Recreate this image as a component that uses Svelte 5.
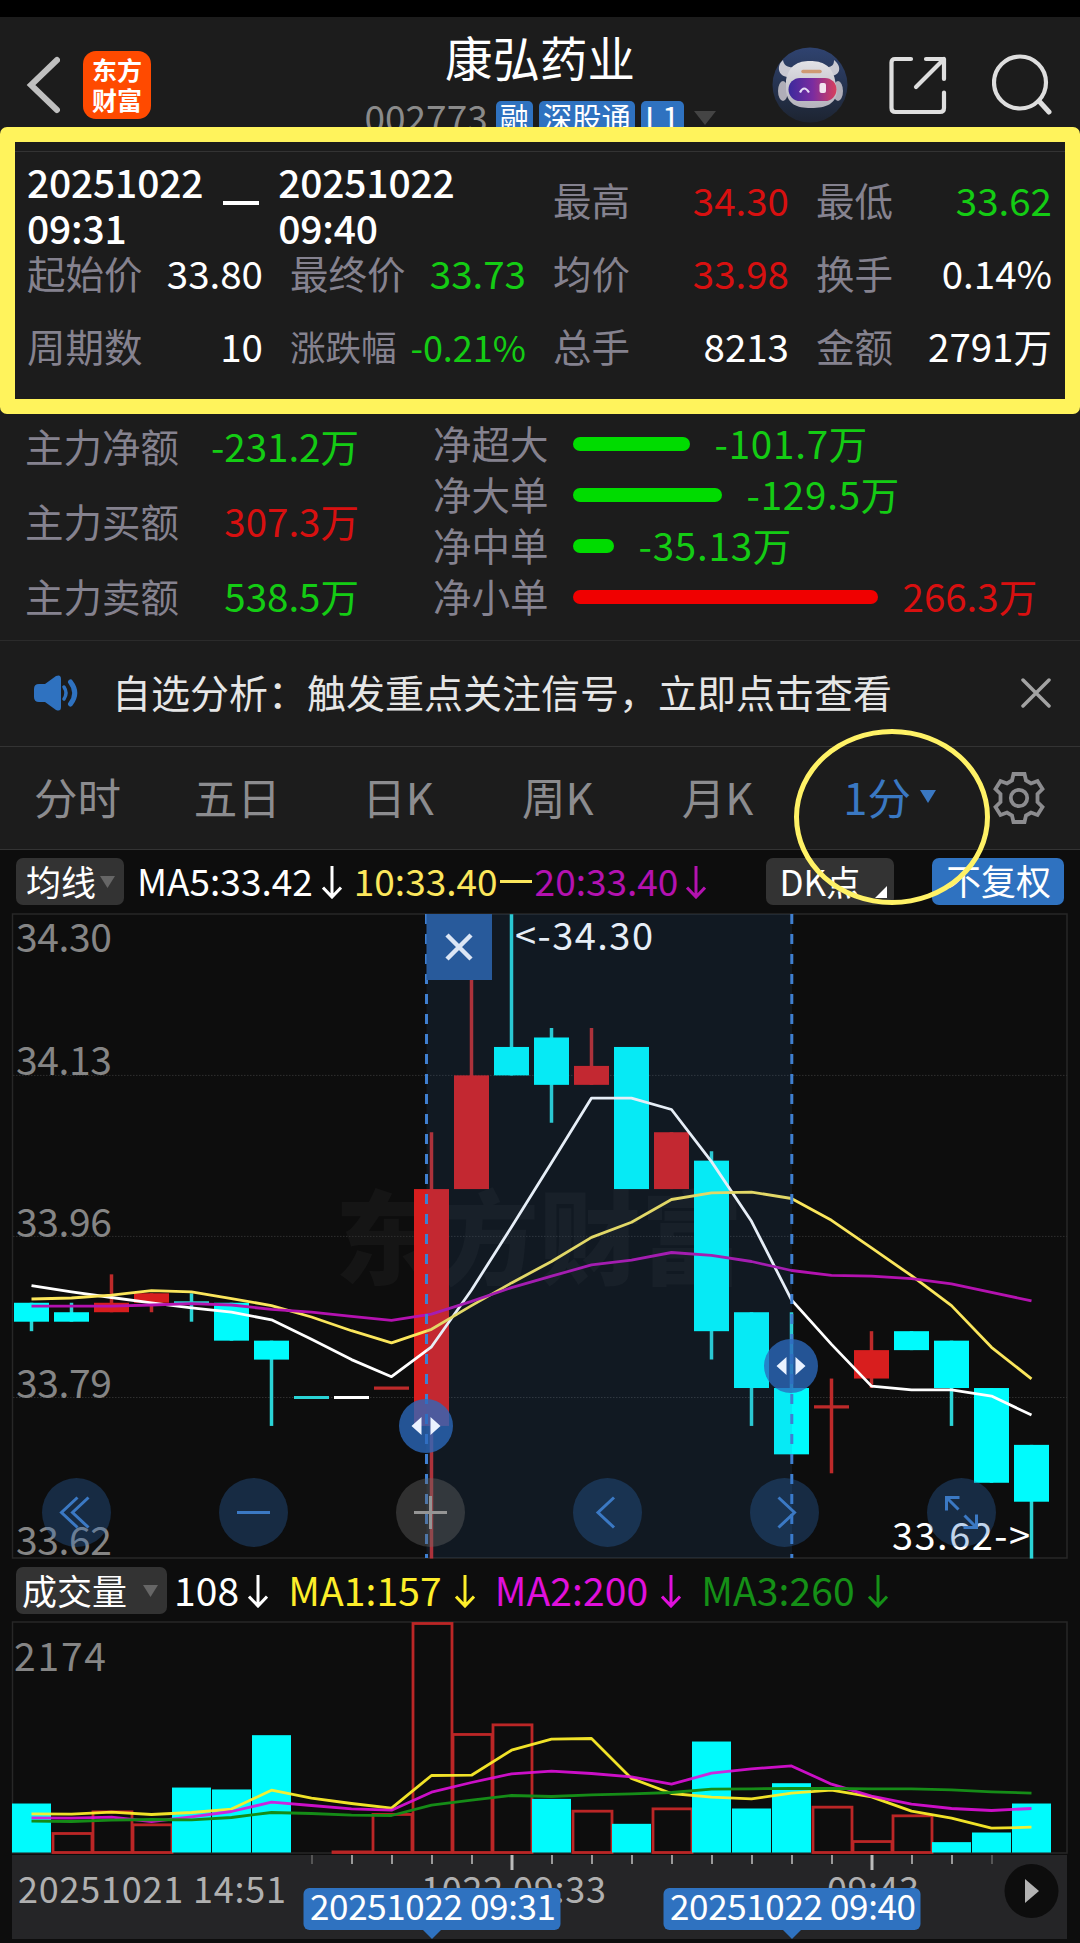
<script lang="ts">
	type Tone = 'up' | 'down' | 'flat';

	interface Quote {
		label: string;
		value: string;
		tone: Tone;
		small?: boolean;
	}

	const topQuotes: Quote[] = [
		{ label: '最高', value: '34.30', tone: 'up' },
		{ label: '最低', value: '33.62', tone: 'down' }
	];

	const quotes: Quote[] = [
		{ label: '起始价', value: '33.80', tone: 'flat' },
		{ label: '最终价', value: '33.73', tone: 'down' },
		{ label: '均价', value: '33.98', tone: 'up' },
		{ label: '换手', value: '0.14%', tone: 'flat' },
		{ label: '周期数', value: '10', tone: 'flat' },
		{ label: '涨跌幅', value: '-0.21%', tone: 'down', small: true },
		{ label: '总手', value: '8213', tone: 'flat' },
		{ label: '金额', value: '2791万', tone: 'flat' }
	];

	const mainFunds: Quote[] = [
		{ label: '主力净额', value: '-231.2万', tone: 'down' },
		{ label: '主力买额', value: '307.3万', tone: 'up' },
		{ label: '主力卖额', value: '538.5万', tone: 'down' }
	];

	const orders: (Quote & { width: number })[] = [
		{ label: '净超大', value: '-101.7万', tone: 'down', width: 117 },
		{ label: '净大单', value: '-129.5万', tone: 'down', width: 149 },
		{ label: '净中单', value: '-35.13万', tone: 'down', width: 41 },
		{ label: '净小单', value: '266.3万', tone: 'up', width: 305 }
	];

	const tabs = ['分时', '五日', '日K', '周K', '月K'];

	// open/close top, bottom, high, low, colour
	type Candle = [number, number, number, number, 'r' | 'c' | 'w'];
	const candles: Candle[] = [
		[33.89, 33.87, 33.89, 33.86, 'c'],
		[33.88, 33.87, 33.89, 33.87, 'c'],
		[33.89, 33.88, 33.92, 33.88, 'r'],
		[33.9, 33.89, 33.9, 33.88, 'r'],
		[33.89, 33.89, 33.9, 33.87, 'c'],
		[33.89, 33.85, 33.89, 33.85, 'c'],
		[33.85, 33.83, 33.85, 33.76, 'c'],
		[33.79, 33.79, 33.79, 33.79, 'c'],
		[33.79, 33.79, 33.79, 33.79, 'w'],
		[33.8, 33.8, 33.8, 33.8, 'r'],
		[34.01, 33.76, 34.07, 33.62, 'r'],
		[34.13, 34.01, 34.24, 34.01, 'r'],
		[34.16, 34.13, 34.3, 34.13, 'c'],
		[34.17, 34.12, 34.18, 34.08, 'c'],
		[34.14, 34.12, 34.18, 34.12, 'r'],
		[34.16, 34.01, 34.16, 34.01, 'c'],
		[34.07, 34.01, 34.07, 34.01, 'r'],
		[34.04, 33.86, 34.05, 33.83, 'c'],
		[33.88, 33.8, 33.88, 33.76, 'c'],
		[33.8, 33.73, 33.88, 33.73, 'c'],
		[33.78, 33.78, 33.81, 33.71, 'r'],
		[33.84, 33.81, 33.86, 33.8, 'r'],
		[33.86, 33.84, 33.86, 33.84, 'c'],
		[33.85, 33.8, 33.85, 33.76, 'c'],
		[33.8, 33.7, 33.8, 33.7, 'c'],
		[33.74, 33.68, 33.74, 33.62, 'c']
	];

	const ma5 = [33.908, 33.9016, 33.8956, 33.89, 33.8846, 33.88, 33.872, 33.8515, 33.83, 33.812, 33.8435, 33.9035, 33.97, 34.0377, 34.106, 34.106, 34.094, 34.039, 33.976, 33.893, 33.846, 33.802, 33.798, 33.798, 33.7915, 33.7715];
	const ma10 = [33.894, 33.895, 33.898, 33.9027, 33.9016, 33.8944, 33.887, 33.875, 33.8605, 33.8477, 33.862, 33.887, 33.911, 33.9336, 33.959, 33.975, 33.999, 34.006, 34.0068, 34, 33.977, 33.948, 33.9186, 33.887, 33.843, 33.8096];
	const ma20 = [33.8865, 33.8865, 33.8865, 33.8876, 33.889, 33.8876, 33.883, 33.88, 33.8756, 33.8714, 33.878, 33.8914, 33.906, 33.918, 33.93, 33.935, 33.943, 33.94, 33.9336, 33.924, 33.919, 33.918, 33.9155, 33.91, 33.901, 33.892];

	const volumes = [463, 189, 394, 271, 614, 596, 1109, 0, 15, 369, 2174, 1125, 1216, 507, 400, 271, 422, 1049, 416, 655, 438, 113, 356, 98, 189, 463];
	const volumeRed = [1, 2, 3, 8, 9, 10, 11, 12, 14, 16, 20, 21, 22];
	const volMa1 = [366, 362, 381, 359, 378, 410, 589, 514, 463, 419, 728, 731, 967, 1071, 1078, 700, 558, 523, 507, 561, 589, 526, 391, 325, 230, 239];
	const volMa2 = [328, 325, 334, 293, 337, 388, 476, 444, 413, 400, 570, 662, 744, 769, 747, 715, 646, 750, 791, 819, 646, 533, 457, 416, 397, 416];
	const volMa3 = [296, 293, 306, 312, 309, 331, 378, 369, 353, 350, 447, 495, 539, 529, 545, 555, 567, 599, 602, 605, 605, 602, 602, 592, 573, 561];

	const colors = { r: '#d81e1e', c: '#00fbfd', w: '#ffffff' };
	const lineColors = { r: '#bd2a2a', c: '#2ad4d6', w: '#ffffff' };

	const cx = (i: number) => 31.5 + i * 40;
	const py = (p: number) => 484.5 - (p - 33.79) * 947.4;
	const vy = (v: number) => 231.5 - (v / 2174) * 230;
	const line = (values: number[], scale: (n: number) => number) =>
		values.map((v, i) => `${cx(i)},${scale(v).toFixed(1)}`).join(' ');

	const priceLabels = [
		{ text: '34.30', y: 39 },
		{ text: '34.13', y: 161.5 },
		{ text: '33.96', y: 323.5 },
		{ text: '33.79', y: 484.5 },
		{ text: '33.62', y: 642 }
	];

	const gridLines = [162.4, 323.4, 484.5];
	const handles = [
		{ x: 426, y: 513 },
		{ x: 791, y: 453 }
	];
	const ticks = Array.from({ length: 18 }, (_, i) => 312 + i * 40);
	const rangeTags = [
		{ text: '20251022 09:31', x: 432 },
		{ text: '20251022 09:40', x: 792 }
	];
</script>

{#snippet arrow()}
	<svg class="arrow" width="20" height="34" viewBox="0 0 20 34">
		<path d="M10 1V32M1 22.5L10 32L19 22.5" fill="none" stroke="currentColor" stroke-width="3" />
	</svg>
{/snippet}

{#snippet quote(item: Quote)}
	<div class="quote" class:small={item.small}>
		<span class="label">{item.label}</span>
		<span class={item.tone}>{item.value}</span>
	</div>
{/snippet}

<div class="page">
	<header>
		<div class="left">
			<svg width="34" height="58" viewBox="0 0 34 58">
				<path d="M31 4L5 29L31 54" fill="none" stroke="#bfbfbf" stroke-width="6" stroke-linecap="round" />
			</svg>
			<div class="logo"><span>东方</span><span>财富</span></div>
		</div>
		<div class="title">
			<h1>康弘药业</h1>
			<div class="sub">
				<span class="code">002773</span>
				<span class="badge">融</span>
				<span class="badge">深股通</span>
				<span class="badge level">L1</span>
				<svg width="22" height="14" viewBox="0 0 22 14"><path d="M0 0H22L11 14Z" fill="#444" /></svg>
			</div>
		</div>
		<div class="actions">
			<svg width="76" height="76" viewBox="0 0 76 76">
				<defs>
					<linearGradient id="visor">
						<stop offset="0" stop-color="#3b2a9c" />
						<stop offset="0.5" stop-color="#7a2ca0" />
						<stop offset="1" stop-color="#d8405c" />
					</linearGradient>
					<linearGradient id="sky" x2="0" y2="1">
						<stop offset="0" stop-color="#2f4370" />
						<stop offset="1" stop-color="#1d2431" />
					</linearGradient>
					<linearGradient id="shell" x2="0" y2="1">
						<stop offset="0" stop-color="#e2e2e6" />
						<stop offset="1" stop-color="#b4b2bc" />
					</linearGradient>
				</defs>
				<circle cx="38" cy="38" r="37.5" fill="url(#sky)" />
				<path d="M11 13C4 19 6 30 17 30L24 20C16 21 12 19 11 13ZM62 13C70 19 69 29 58 29L51 20C60 21 62 18 62 13Z" fill="#c9c9d2" />
				<ellipse cx="11" cy="44" rx="5" ry="10" fill="#b0aeb8" />
				<ellipse cx="66" cy="44" rx="5" ry="10" fill="#b0aeb8" />
				<path d="M14 33C17 18 26 14 38 14S60 18 63 33L65 44C64 57 54 61 39 61S16 57 14 44Z" fill="url(#shell)" />
				<path d="M31 24.500H48" stroke="#cf9a73" stroke-width="3.5" stroke-linecap="round" />
				<rect x="16.5" y="31" width="48" height="23" rx="11.5" fill="url(#visor)" />
				<path d="M28 45.500Q32 37.500 37 45.500" fill="none" stroke="#e6dcf5" stroke-width="2.2" />
				<rect x="47.5" y="36" width="6.5" height="10" rx="2" fill="#f3e4ee" />
			</svg>
			<svg class="export" width="58" height="60" viewBox="0 0 58 60">
				<g fill="none" stroke="#dedede" stroke-width="4.2" stroke-linecap="round" stroke-linejoin="round">
					<path d="M22 4H6Q2.500 4 2.500 7.500V53Q2.500 57 6.500 57H51Q55 57 55 53V37.500" />
					<path d="M37 4H55V24M55 4L27 32" />
				</g>
			</svg>
			<svg class="search" width="60" height="62" viewBox="0 0 60 62">
				<circle cx="28" cy="28.500" r="26" fill="none" stroke="#dedede" stroke-width="4.2" />
				<path d="M47 47L57 58" stroke="#dedede" stroke-width="5" stroke-linecap="round" />
			</svg>
		</div>
	</header>

	<section class="quotes">
		<div class="range">
			<div>20251022<br />09:31</div>
			<i></i>
			<div>20251022<br />09:40</div>
		</div>
		{#each topQuotes as item}
			{@render quote(item)}
		{/each}
		{#each quotes as item}
			{@render quote(item)}
		{/each}
	</section>

	<section class="funds">
		<div class="main-funds">
			{#each mainFunds as item}
				{@render quote(item)}
			{/each}
		</div>
		<div class="orders">
			{#each orders as item}
				<div class="order">
					<span class="label">{item.label}</span>
					<span class="bar {item.tone}" style="width: {item.width}px"></span>
					<span class="amount {item.tone}">{item.value}</span>
				</div>
			{/each}
		</div>
	</section>

	<section class="notice">
		<svg width="46" height="38" viewBox="0 0 46 38">
			<path d="M5 10H11L22 2Q27 0 27 5V33Q27 38 22 36L11 28H5Q0 28 0 23V15Q0 10 5 10Z" fill="#2f72c0" />
			<path d="M30 13Q34 19 30 25" fill="none" stroke="#2f72c0" stroke-width="3.5" stroke-linecap="round" />
			<path d="M36.500 8Q45 19 36.500 30" fill="none" stroke="#2f72c0" stroke-width="5" stroke-linecap="round" />
		</svg>
		<p>自选分析：触发重点关注信号，立即点击查看</p>
		<svg width="30" height="30" viewBox="0 0 30 30">
			<path d="M2 2L28 28M28 2L2 28" stroke="#a3a3a3" stroke-width="3.5" stroke-linecap="round" />
		</svg>
	</section>

	<nav>
		{#each tabs as tab}
			<span class="tab" class:kline={tab.endsWith('K')}>{tab}</span>
		{/each}
		<span class="tab active">
			1分
			<svg width="16" height="13" viewBox="0 0 16 13"><path d="M0 0H16L8 13Z" fill="currentColor" /></svg>
		</span>
		<svg width="54" height="54" viewBox="-27 -27 54 54">
			<g fill="none" stroke="#8c8c8f" stroke-width="3.8">
				<path d="M-5.500 -24H5.500L7 -17.500L12 -14.500L18.500 -17L23.500 -9L18.500 -4V4L23.500 9L18.500 17L12 14.500L7 17.500L5.500 24H-5.500L-7 17.500L-12 14.500L-18.500 17L-23.500 9L-18.500 4V-4L-23.500 -9L-18.500 -17L-12 -14.500L-7 -17.500Z" />
				<circle r="8.200" />
			</g>
		</svg>
	</nav>

	<div class="toolbar">
		<span class="select">
			<span>均线</span>
			<svg width="15" height="12" viewBox="0 0 15 12"><path d="M0 0H15L7.500 12Z" fill="#666" /></svg>
		</span>
		<span class="ma white"><span>MA5:33.42</span>{@render arrow()}</span>
		<span class="ma yellow"><span>10:33.40</span><b></b></span>
		<span class="ma purple"><span>20:33.40</span>{@render arrow()}</span>
		<span class="dk">
			<span>DK点</span>
			<svg width="12" height="12" viewBox="0 0 12 12"><path d="M12 0V12H0Z" fill="#fff" /></svg>
		</span>
		<span class="adjust">不复权</span>
	</div>

	<svg class="chart" width="1080" height="647" viewBox="0 0 1080 647">
		<text class="watermark" x="335" y="364" textLength="408">东方财富</text>
		<rect x="12.5" y="1" width="1054.5" height="644" fill="none" stroke="#272727" stroke-width="1.5" />
		{#each gridLines as y}
			<path d="M13 {y}H1067" stroke="#303030" stroke-dasharray="1.5 1.5" />
		{/each}
		{#each priceLabels as label}
			<text class="axis" x="16" y={label.y} textLength="96">{label.text}</text>
		{/each}

		{#each candles as [top, bottom, high, low, tone], i}
			{#if high > low}
				<path d="M{cx(i)} {py(high)}V{py(low)}" stroke={lineColors[tone]} stroke-width="3.5" />
			{/if}
			{#if top === bottom}
				<path d="M{cx(i) - 17.5} {py(top)}h35" stroke={lineColors[tone]} stroke-width="3.2" />
			{:else}
				<rect x={cx(i) - 17.5} y={py(top)} width="35" height={py(bottom) - py(top)} fill={colors[tone]} />
			{/if}
		{/each}

		<text class="mark" x="515" y="37" textLength="138">&lt;-34.30</text>
		<text class="mark" x="892" y="636.5" textLength="138">33.62-&gt;</text>

		<g fill="none" stroke-width="2.8" stroke-linejoin="round">
			<polyline points={line(ma5, py)} stroke="#fff" />
			<polyline points={line(ma10, py)} stroke="#fbe65c" />
			<polyline points={line(ma20, py)} stroke="#b412b0" />
		</g>

		<rect x="426.5" y="1" width="365.5" height="644" fill="#2f72c0" fill-opacity="0.12" />
		<path d="M426.5 1V645M791.8 1V645" stroke="#3f7fd0" stroke-width="3" stroke-dasharray="10 10" />

		<rect x="426.5" y="1" width="65.5" height="66" fill="#285a9b" />
		<path d="M447 22L471 46M471 22L447 46" stroke="#dce6f5" stroke-width="4.5" />

		{#each handles as handle}
			<g transform="translate({handle.x} {handle.y})">
				<circle r="27" fill="#2c69bd" fill-opacity="0.78" />
				<path d="M-14.500 0L-4.500 -9V9ZM14.500 0L4.500 -9V9Z" fill="#eaf2ff" />
			</g>
		{/each}

		<g fill="none" stroke="#3b79c4" stroke-width="3">
			<g class="ctl" transform="translate(76.500 599.500)">
				<circle r="34.500" />
				<path d="M1 -15L-15 0L1 15M12 -15L-4 0L12 15" />
			</g>
			<g class="ctl" transform="translate(253.500 599.500)">
				<circle r="34.500" />
				<path d="M-16.500 0H16.500" />
			</g>
			<g class="ctl gray" transform="translate(430.500 599.500)">
				<circle r="34.500" />
				<path d="M-16.500 0H16.500M0 -16.500V16.500" />
			</g>
			<g class="ctl" transform="translate(607.500 599.500)">
				<circle r="34.500" />
				<path d="M6.500 -15L-9.500 0L6.500 15" />
			</g>
			<g class="ctl" transform="translate(784.500 599.500)">
				<circle r="34.500" />
				<path d="M-6 -15L10 0L-6 15" />
			</g>
			<g class="ctl" transform="translate(961.500 599.500)">
				<circle r="34.500" />
				<path d="M-15 -2V-15H-2M-15 -15L-3 -3M3 3L15 15M15 2V15H2" />
			</g>
		</g>
	</svg>

	<div class="toolbar vol">
		<span class="select">
			<span>成交量</span>
			<svg width="15" height="12" viewBox="0 0 15 12"><path d="M0 0H15L7.500 12Z" fill="#666" /></svg>
		</span>
		<span class="ma white"><span>108</span>{@render arrow()}</span>
		<span class="ma bright"><span>MA1:157</span>{@render arrow()}</span>
		<span class="ma magenta"><span>MA2:200</span>{@render arrow()}</span>
		<span class="ma green"><span>MA3:260</span>{@render arrow()}</span>
	</div>

	<svg class="chart" width="1080" height="234" viewBox="0 0 1080 234">
		<rect x="12.5" y="1" width="1054.5" height="231" fill="none" stroke="#272727" stroke-width="1.5" />
		<text class="axis" x="14" y="50" textLength="92">2174</text>
		{#each volumes as volume, i}
			{#if volumeRed.includes(i)}
				<rect x={cx(i) - 18.5} y={vy(volume) + 1} width="39" height={230.5 - vy(volume)} fill="none" stroke="#bb2626" stroke-width="2.8" />
			{:else}
				<rect x={cx(i) - 19.5} y={vy(volume)} width="39" height={231.5 - vy(volume)} fill="#00fbfd" />
			{/if}
		{/each}
		<g fill="none" stroke-width="2.8" stroke-linejoin="round">
			<polyline points={line(volMa1, vy)} stroke="#fdee2a" stroke-opacity="0.95" />
			<polyline points={line(volMa2, vy)} stroke="#e010dc" stroke-opacity="0.9" />
			<polyline points={line(volMa3, vy)} stroke="#158c17" />
		</g>
	</svg>

	<svg class="chart" width="1080" height="88" viewBox="0 0 1080 88">
		<rect x="12" width="1055" height="84" fill="#252527" />
		{#each ticks as x, i}
			{#if x === 512 || x === 872}
				<path d="M{x} 0V15" stroke="#bbb" stroke-width="3" />
			{:else}
				<path d="M{x} 0V9" stroke={i === 0 || i === 17 ? '#555' : '#999'} stroke-width="2" />
			{/if}
		{/each}
		<g class="time">
			<text x="18" y="48" textLength="268">20251021 14:51</text>
			<text x="421" y="48" textLength="185">1022 09:33</text>
			<text x="827" y="48" textLength="92">09:43</text>
		</g>
		{#each rangeTags as tag}
			<g transform="translate({tag.x} 0)">
				<rect x="-128.5" y="33" width="257" height="42" rx="6" fill="#2f72c0" />
				<path d="M-9 75H9L0 84Z" fill="#2f72c0" />
				<text class="tag" x="-122" y="65" textLength="246">{tag.text}</text>
			</g>
		{/each}
		<circle cx="1031.5" cy="36" r="27" fill="#0d0d0d" />
		<path d="M1025 24L1039 36L1025 48Z" fill="#b3b3b3" />
	</svg>

	<div class="highlight"></div>
	<div class="ring"></div>
</div>

<style>
	:global(body) {
		background: #0d0d0d;
	}

	.page {
		position: relative;
		width: 1080px;
		height: 1943px;
		box-sizing: border-box;
		padding-top: 17px;
		overflow: hidden;
		background: linear-gradient(#000 17px, #1c1c1c 17px, #1c1c1c 850px, #0d0d0d 850px);
		color: #fff;
		font-family: 'Noto Sans CJK SC', sans-serif;
		font-size: 38.5px;
		line-height: 1;
		white-space: nowrap;
	}

	svg {
		display: block;
		flex: none;
	}

	header {
		display: grid;
		grid-template-columns: 1fr auto 1fr;
		height: 134px;
	}

	.left {
		display: flex;
		align-items: center;
		gap: 23px;
		height: 135px;
		padding-left: 26px;
	}

	.logo {
		display: flex;
		flex-direction: column;
		align-items: center;
		justify-content: center;
		gap: 3px;
		width: 68px;
		height: 68px;
		border-radius: 13px;
		background: #ff4a00;
		font-size: 25px;
		font-weight: 700;
		line-height: 27px;
	}

	.title {
		display: flex;
		flex-direction: column;
		align-items: center;
	}

	h1 {
		margin: 11px 0 0;
		font-size: 47.5px;
		font-weight: 400;
		line-height: 58px;
	}

	.sub {
		display: flex;
		align-items: flex-start;
		gap: 6px;
		margin-top: 15px;
	}

	.sub svg {
		margin: 10px 0 0 4px;
	}

	.code {
		margin-right: 2px;
		color: #8a8a8a;
		font-size: 37px;
		line-height: 30px;
	}

	.badge {
		padding: 0 4px;
		border-radius: 5px;
		background: #2f72c0;
		font-size: 29.3px;
		line-height: 31px;
	}

	.level {
		padding: 0 4px;
		font-size: 31.5px;
	}

	.actions {
		display: flex;
		align-items: center;
		justify-content: flex-end;
		height: 135px;
		padding-right: 28px;
	}

	.export {
		margin: 0 45px 0 41px;
	}

	.quotes {
		display: grid;
		grid-template-columns: repeat(4, 236px);
		grid-auto-rows: 73px;
		column-gap: 27px;
		height: 258px;
		box-sizing: border-box;
		padding: 11px 26px 0 27px;
		border-top: 1px solid #333;
	}

	.range {
		grid-column: span 2;
		display: flex;
		align-items: center;
		font-size: 39px;
		font-weight: 500;
		line-height: 46px;
		letter-spacing: -0.2px;
	}

	.range i {
		width: 36px;
		height: 4px;
		margin: 6px 19px 0 20px;
		background: #fff;
	}

	.range div {
		margin-top: 9px;
	}

	.quote {
		display: flex;
		align-items: center;
		justify-content: space-between;
	}

	.small {
		font-size: 35.5px;
	}

	.small .down {
		font-size: 36px;
	}

	.label {
		color: #85828f;
	}

	.up {
		color: #d81010;
	}

	.down {
		color: #14cc14;
	}

	.flat {
		color: #fff;
	}

	.funds {
		display: flex;
		height: 232px;
		box-sizing: border-box;
		border-bottom: 1px solid #2b2b2b;
	}

	.main-funds {
		width: 334px;
		margin: -1px 0 0 25px;
	}

	.main-funds .quote {
		height: 75px;
	}

	.orders {
		margin: 8px 0 0 74px;
	}

	.order {
		display: flex;
		align-items: center;
		height: 51px;
	}

	.bar {
		height: 14px;
		margin: 3px 25px 0 24px;
		border-radius: 7px;
		background: #00dc00;
	}

	.bar.up {
		background: #f00000;
	}

	.amount.down {
		letter-spacing: 0.8px;
	}

	.notice {
		display: flex;
		align-items: center;
		height: 106px;
		box-sizing: border-box;
		padding: 0 29px 1px 34px;
		border-bottom: 1px solid #333;
	}

	.notice p {
		flex: 1;
		margin: -4px 0 0 32px;
		color: #e6e6e6;
		font-size: 39px;
	}

	nav {
		display: flex;
		align-items: center;
		height: 103px;
		box-sizing: border-box;
		padding: 0 34px 1px;
		border-bottom: 1px solid #333;
		color: #8c8c8f;
		font-size: 43.5px;
	}

	.tab {
		width: 160px;
		box-sizing: border-box;
		margin-top: -2px;
	}

	.kline {
		padding-left: 9px;
	}

	.active {
		display: flex;
		align-items: center;
		gap: 9px;
		padding-left: 11px;
		color: #3a78c2;
	}

	.toolbar {
		display: flex;
		align-items: center;
		height: 63px;
		padding-left: 16px;
		font-size: 37px;
	}

	.toolbar span > span {
		margin-top: -3px;
	}

	.select {
		display: flex;
		align-items: center;
		justify-content: space-between;
		width: 108px;
		height: 47px;
		box-sizing: border-box;
		padding: 0 9px 0 10px;
		border-radius: 7px;
		background: #333;
		font-size: 35px;
	}

	.ma {
		display: flex;
		align-items: center;
		gap: 9px;
	}

	.ma.white {
		margin-left: 13px;
	}

	.ma.yellow {
		gap: 2px;
		margin-left: 12px;
		color: #fbe65c;
	}

	.ma b {
		width: 32px;
		height: 3px;
		background: currentColor;
	}

	.purple {
		gap: 8px;
		margin-left: 3px;
		color: #b412b0;
	}

	.dk {
		display: flex;
		align-items: center;
		width: 128px;
		height: 47px;
		box-sizing: border-box;
		margin-left: 60px;
		padding: 0 7px 0 13px;
		border-radius: 7px;
		background: #333;
		font-size: 35px;
	}

	.dk svg {
		margin: 20px 0 0 auto;
	}

	.adjust {
		width: 132px;
		height: 47px;
		margin-left: 38px;
		border-radius: 7px;
		background: #2f72c0;
		font-size: 35px;
		line-height: 44px;
		text-align: center;
	}

	.vol {
		height: 61px;
		font-size: 39px;
		letter-spacing: 0.1px;
	}

	.vol .select {
		width: 151px;
		padding: 0 9px 0 6px;
		letter-spacing: 0;
	}

	.vol .ma {
		gap: 13px;
		margin-left: 20px;
	}

	.vol .white {
		gap: 9px;
		margin-left: 7px;
	}

	.bright {
		color: #fdee2a;
	}

	.magenta {
		color: #e010dc;
	}

	.green {
		color: #159017;
	}

	.axis {
		fill: #858585;
		font-size: 39px;
	}

	.mark {
		fill: #fff;
		font-size: 38px;
	}

	.watermark {
		fill: #fff;
		fill-opacity: 0.035;
		font-size: 102px;
		font-weight: 900;
	}

	.ctl circle {
		fill: #2f72c0;
		fill-opacity: 0.3;
		stroke: none;
	}

	.gray circle {
		fill: #666;
		fill-opacity: 0.4;
	}

	.gray path {
		stroke: #959595;
	}

	.time {
		fill: #b0b0b0;
		font-size: 36px;
	}

	.tag {
		fill: #fff;
		font-size: 35px;
	}

	/* Pen marks drawn over the page */
	.highlight {
		position: absolute;
		top: 127px;
		left: 0;
		width: 1080px;
		height: 287px;
		box-sizing: border-box;
		border: 15px solid #fff35c;
		border-radius: 7px;
	}

	.ring {
		position: absolute;
		top: 729px;
		left: 794px;
		width: 196px;
		height: 176px;
		box-sizing: border-box;
		border: 5px solid #fff266;
		border-radius: 50%;
	}
</style>
